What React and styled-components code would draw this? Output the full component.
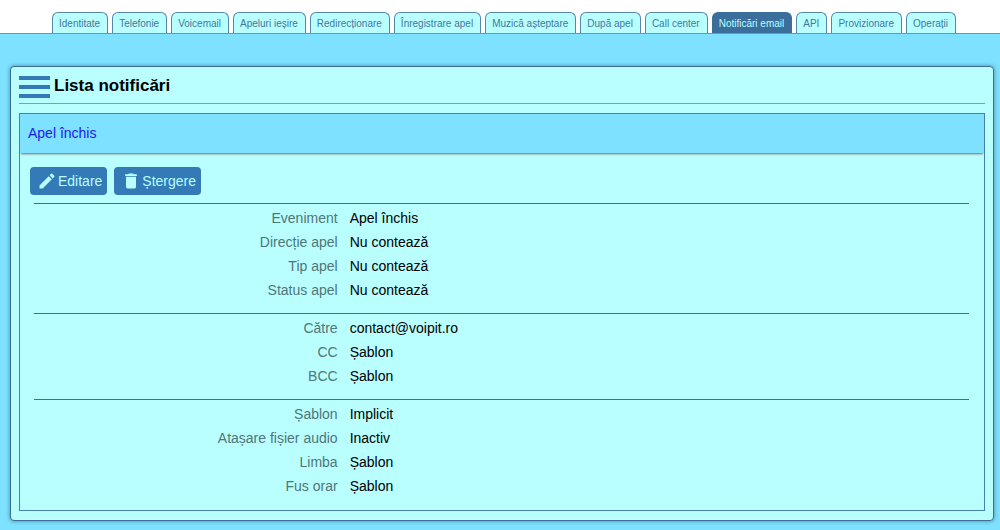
import React from 'react'
import styled, { createGlobalStyle } from 'styled-components'

const tabs = [
  'Identitate',
  'Telefonie',
  'Voicemail',
  'Apeluri ieșire',
  'Redirecționare',
  'Înregistrare apel',
  'Muzică așteptare',
  'După apel',
  'Call center',
  'Notificări email',
  'API',
  'Provizionare',
  'Operații',
]

const groups = [
  [
    ['Eveniment', 'Apel închis'],
    ['Direcție apel', 'Nu contează'],
    ['Tip apel', 'Nu contează'],
    ['Status apel', 'Nu contează'],
  ],
  [
    ['Către', 'contact@voipit.ro'],
    ['CC', 'Șablon'],
    ['BCC', 'Șablon'],
  ],
  [
    ['Șablon', 'Implicit'],
    ['Atașare fișier audio', 'Inactiv'],
    ['Limba', 'Șablon'],
    ['Fus orar', 'Șablon'],
  ],
]

const App = () => {
  return (
    <>
      <GlobalStyle />
      <Tabs>
        {tabs.map((tab) => (
          <Tab key={tab} href="#" $active={tab === 'Notificări email'}>
            {tab}
          </Tab>
        ))}
      </Tabs>
      <Main>
        <Card>
          <CardHeader>
            <MenuButton aria-label="Meniu">
              <span />
              <span />
              <span />
            </MenuButton>
            <h1>Lista notificări</h1>
          </CardHeader>
          <Notification>
            <NotificationHeader>
              <a href="#">Apel închis</a>
            </NotificationHeader>
            <Actions>
              <Button>
                <svg viewBox="0 0 24 24">
                  <path d="M3 17.25V21h3.75L17.81 9.94l-3.75-3.75L3 17.25zM20.71 7.04a1 1 0 0 0 0-1.41l-2.34-2.34a1 1 0 0 0-1.41 0l-1.83 1.83 3.75 3.75 1.83-1.83z" />
                </svg>
                Editare
              </Button>
              <Button>
                <svg viewBox="0 0 24 24">
                  <path d="M6 19c0 1.1.9 2 2 2h8c1.1 0 2-.9 2-2V7H6v12zM19 4h-3.5l-1-1h-5l-1 1H5v2h14V4z" />
                </svg>
                Ștergere
              </Button>
            </Actions>
            <Details>
              {groups.map((rows) => (
                <Group key={rows[0][0]}>
                  {rows.map(([label, value]) => (
                    <Row key={label}>
                      <dt>{label}</dt>
                      <dd>{value}</dd>
                    </Row>
                  ))}
                </Group>
              ))}
            </Details>
          </Notification>
        </Card>
      </Main>
    </>
  )
}

const GlobalStyle = createGlobalStyle`
  * {
    box-sizing: border-box;
  }

  body {
    margin: 0;
    background: #7de1ff;
    color: #000;
    font-family: 'Liberation Sans', Arial, sans-serif;
    font-size: 14px;
    line-height: 24px;
  }
`

const Tabs = styled.nav`
  display: flex;
  gap: 4px;
  padding: 12px 40px 0 52px;
  background: #fff;
  border-bottom: 1px solid #5b9bc4;
`

const Tab = styled.a`
  padding: 2px 7px 0 6px;
  border: 1px solid ${(props) => (props.$active ? '#3c6e9b' : '#5588ab')};
  border-bottom: 0;
  border-radius: 6px 6px 0 0;
  background: ${(props) => (props.$active ? '#3c6e9b' : '#b9ffff')};
  color: ${(props) => (props.$active ? '#b9ffff' : '#4078a0')};
  font-size: 10px;
  line-height: 18px;
  text-decoration: none;
  white-space: nowrap;
`

const Main = styled.main`
  padding: 32px 6px 9px 10px;
`

const Card = styled.section`
  padding: 8px 8px 9px;
  border: 1px solid #3c6e9b;
  border-radius: 4px;
  background: #b9ffff;
  box-shadow: 0 0 4px rgba(0, 0, 0, 0.4);
`

const CardHeader = styled.header`
  display: flex;
  gap: 4px;
  height: 29px;
  margin-bottom: 9px;
  border-bottom: 1px solid #6aa5c4;

  h1 {
    margin: 0;
    font-size: 17px;
    line-height: 22px;
  }
`

const MenuButton = styled.button`
  display: flex;
  flex-direction: column;
  gap: 5px;
  width: 31px;
  padding: 1px 0 0;
  border: 0;
  background: none;

  span {
    width: 100%;
    height: 4px;
    background: #337ab7;
  }
`

const Notification = styled.article`
  border: 1px solid #4682ad;
`

const NotificationHeader = styled.div`
  padding: 7px 8px 8px;
  background: #7de1ff;
  box-shadow: 0 2px 2px -1px rgba(130, 80, 70, 0.9);

  a {
    color: #1a1af0;
    text-decoration: none;
  }
`

const Actions = styled.div`
  display: flex;
  gap: 7px;
  padding: 14px 10px 8px;
`

const Button = styled.button`
  display: flex;
  align-items: center;
  gap: 1px;
  height: 28px;
  padding: 0 5px 0 7px;
  border: 0;
  border-radius: 4px;
  background: #337ab7;
  color: #b9ffff;
  font: inherit;

  svg {
    width: 20px;
    height: 20px;
    fill: currentColor;
  }
`

const Details = styled.div`
  padding: 0 15px 1px 14px;
`

const Group = styled.dl`
  margin: 0;
  padding: 2px 0 11px;
  border-top: 1px solid #3c7099;
`

const Row = styled.div`
  display: grid;
  grid-template-columns: 1fr 2fr;

  dt {
    padding-right: 8px;
    color: #4f7678;
    text-align: right;
  }

  dd {
    margin: 0;
    padding-left: 4px;
  }
`

export default App
